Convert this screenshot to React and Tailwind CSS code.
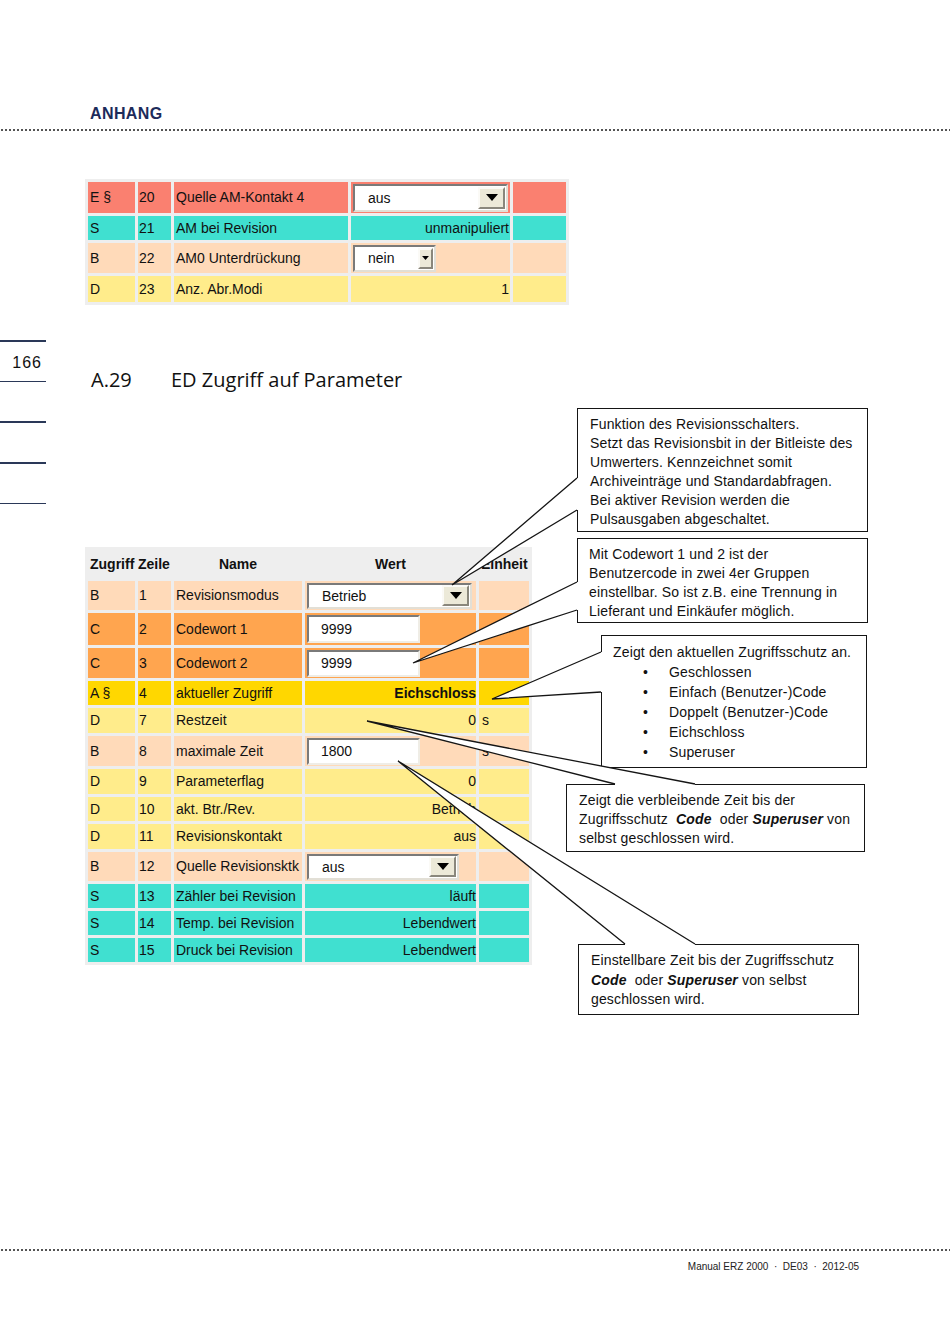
import React from 'react';

const Tri = ({ cls = 'w-[12px] h-[7px]' }) => (
  <svg viewBox="0 0 12 7" className={cls}>
    <path d="M0 0H12L6 7Z" fill="#000" />
  </svg>
);

const Select = ({ value, box, btn, tri }) => (
  <div
    className={`flex items-center justify-between bg-white border-2 border-t-[#7a7a7a] border-l-[#7a7a7a] border-r-[#e2dfd6] border-b-[#e2dfd6] ${box}`}
  >
    <span className="pl-[13px] text-[14px] leading-none text-[#111]">{value}</span>
    <span
      className={`mr-px flex items-center justify-center bg-[#ece9d8] border-2 border-t-[#fbfaf6] border-l-[#fbfaf6] border-r-[#8a877c] border-b-[#8a877c] ${btn}`}
    >
      <Tri cls={tri} />
    </span>
  </div>
);

const Input = ({ value, box = 'w-[113px] h-[28px]' }) => (
  <div
    className={`flex items-center bg-white border-2 border-t-[#7a7a7a] border-l-[#7a7a7a] border-r-[#efede6] border-b-[#efede6] ${box}`}
  >
    <span className="pl-[12px] text-[14px] leading-none text-[#111]">{value}</span>
  </div>
);

const PEACH = 'bg-[#ffdab9]';
const SALMON = 'bg-[#fa8070]';
const TURQ = 'bg-[#40e0d0]';
const YEL = 'bg-[#ffec8b]';
const ORANGE = 'bg-[#ffa54f]';
const GOLD = 'bg-[#ffd700]';

const topRows = [
  ['E §', '20', 'Quelle AM-Kontakt 4', SALMON, 'h-[31px]',
    <Select value="aus" box="w-[155px] h-[28px]" btn="w-[27px] h-[22px]" />],
  ['S', '21', 'AM bei Revision', TURQ, 'h-[24px]', 'unmanipuliert'],
  ['B', '22', 'AM0 Unterdrückung', PEACH, 'h-[30px]',
    <Select value="nein" box="w-[83px] h-[27px]" btn="w-[15px] h-[21px]" tri="w-[7px] h-[4px]" />],
  ['D', '23', 'Anz. Abr.Modi', YEL, 'h-[26px]', '1'],
];

const mainRows = [
  ['B', '1', 'Revisionsmodus', PEACH, 'h-[29px]',
    <Select value="Betrieb" box="w-[165px] h-[26px]" btn="w-[27px] h-[21px]" />, ''],
  ['C', '2', 'Codewort 1', ORANGE, 'h-[32px]', <Input value="9999" />, ''],
  ['C', '3', 'Codewort 2', ORANGE, 'h-[30px]', <Input value="9999" box="w-[113px] h-[27px]" />, ''],
  ['A §', '4', 'aktueller Zugriff', GOLD, 'h-[24px]', <b>Eichschloss</b>, ''],
  ['D', '7', 'Restzeit', YEL, 'h-[25px]', '0', 's'],
  ['B', '8', 'maximale Zeit', PEACH, 'h-[30px]', <Input value="1800" box="w-[113px] h-[27px]" />, 's'],
  ['D', '9', 'Parameterflag', YEL, 'h-[25px]', '0', ''],
  ['D', '10', 'akt. Btr./Rev.', YEL, 'h-[24px]', 'Betrieb', ''],
  ['D', '11', 'Revisionskontakt', YEL, 'h-[25px]', 'aus', ''],
  ['B', '12', 'Quelle Revisionsktk', PEACH, 'h-[29px]',
    <Select value="aus" box="w-[152px] h-[26px]" btn="w-[27px] h-[21px]" />, ''],
  ['S', '13', 'Zähler bei Revision', TURQ, 'h-[24px]', 'läuft', ''],
  ['S', '14', 'Temp. bei Revision', TURQ, 'h-[24px]', 'Lebendwert', ''],
  ['S', '15', 'Druck bei Revision', TURQ, 'h-[24px]', 'Lebendwert', ''],
];

const tails = [
  { tip: [452, 585], a: [577, 478], b: [577, 510], side: 'left' },
  { tip: [413, 663], a: [577, 582], b: [577, 610], side: 'left' },
  { tip: [492, 699], a: [601, 652], b: [601, 692], side: 'left' },
  { tip: [367, 721], a: [615, 784], b: [695, 784], side: 'top' },
  { tip: [398, 761], a: [625, 944], b: [695, 944], side: 'top' },
];

const Dots = () => (
  <div className="h-[2px] w-full bg-[radial-gradient(circle,#555_0.9px,transparent_1.2px)] bg-[length:4px_2px]" />
);

const Rule = () => <div className="h-[1.5px] w-[46px] bg-[#2a3858]" />;

const Callout = ({ cls, children }) => (
  <div className={`bg-white border-[1.5px] border-[#151515] overflow-hidden text-[14px] tracking-[0.15px] text-[#111] ${cls}`}>
    {children}
  </div>
);

const bullets = ['Geschlossen', 'Einfach (Benutzer-)Code', 'Doppelt (Benutzer-)Code', 'Eichschloss', 'Superuser'];

export default function App() {
  return (
    <div className="relative w-[950px] h-[1344px] overflow-hidden bg-white flex flex-col font-['Liberation_Sans',Arial,sans-serif] text-[#111]">
      {/* header */}
      <div className="pt-[104px] pl-[90px] text-[16px] font-bold leading-[20px] text-[#1c2b5a] tracking-[0.4px]">
        ANHANG
      </div>
      <div className="mt-[5px]">
        <Dots />
      </div>

      {/* tail of previous table */}
      <table className="mt-[48px] ml-[85px] border-separate border-spacing-[3px] bg-[#eeeeee] table-fixed w-[481px] text-[14px]">
        <colgroup>
          <col className="w-[47px]" />
          <col className="w-[33px]" />
          <col className="w-[174px]" />
          <col className="w-[159px]" />
          <col className="w-[53px]" />
        </colgroup>
        <tbody>
          {topRows.map(([a, z, n, bg, h, v]) => (
            <tr key={z}>
              <td className={`p-0 pl-[2px] ${bg} ${h}`}>{a}</td>
              <td className={`p-0 pl-[1px] ${bg}`}>{z}</td>
              <td className={`p-0 pl-[2px] ${bg}`}>{n}</td>
              <td className={`p-0 ${bg} ${typeof v === 'string' ? 'text-right pr-px' : 'pl-[2px]'}`}>{v}</td>
              <td className={`p-0 ${bg}`}></td>
            </tr>
          ))}
        </tbody>
      </table>

      {/* section */}
      <div className="mt-[35px] flex">
        <div className="w-[46px] flex flex-col">
          <Rule />
          <div className="h-[39px] flex items-center justify-end pr-[4px] pt-[3px] text-[16px] tracking-[1px]">166</div>
          <Rule />
          <div className="h-[39px]" />
          <Rule />
          <div className="h-[39.5px]" />
          <Rule />
          <div className="h-[39px]" />
          <Rule />
        </div>

        <div className="ml-[39px] w-[481px] flex flex-col">
          <div className="mt-[28px] pl-[6px] flex h-[24px] items-center text-[20px] leading-[24px] font-['Open_Sans',Arial,sans-serif]">
            <span className="w-[80px]">A.29</span>
            <span>ED Zugriff auf Parameter</span>
          </div>

          <table className="mt-[155px] border-separate border-spacing-[3px] bg-[#eeeeee] table-fixed w-[447px] text-[14px]">
            <colgroup>
              <col className="w-[47px]" />
              <col className="w-[33px]" />
              <col className="w-[128px]" />
              <col className="w-[171px]" />
              <col className="w-[50px]" />
            </colgroup>
            <tbody>
              <tr className="font-bold">
                <td className="p-0 pl-[2px] h-[28px]">Zugriff</td>
                <td className="p-0">Zeile</td>
                <td className="p-0 text-center">Name</td>
                <td className="p-0 text-center">Wert</td>
                <td className="p-0 pl-[2px]">Einheit</td>
              </tr>
              {mainRows.map(([a, z, n, bg, h, v, u]) => (
                <tr key={z}>
                  <td className={`p-0 pl-[2px] ${bg} ${h}`}>{a}</td>
                  <td className={`p-0 pl-px ${bg}`}>{z}</td>
                  <td className={`p-0 pl-[2px] whitespace-nowrap ${bg}`}>{n}</td>
                  <td className={`p-0 ${bg} ${typeof v === 'object' && v.type !== 'b' ? 'pl-[2px]' : 'text-right pr-0'}`}>{v}</td>
                  <td className={`p-0 pl-[3px] ${bg}`}>{u}</td>
                </tr>
              ))}
            </tbody>
          </table>
        </div>

        {/* notes */}
        <div className="flex flex-col w-[302px]">
          <Callout cls="mt-[68px] ml-[11px] w-[291px] h-[124px] pl-[12px] pt-[6px] leading-[19px]">
            Funktion des Revisionsschalters.<br />
            Setzt das Revisionsbit in der Bitleiste des<br />
            Umwerters. Kennzeichnet somit<br />
            Archiveinträge und Standardabfragen.<br />
            Bei aktiver Revision werden die<br />
            Pulsausgaben abgeschaltet.
          </Callout>
          <Callout cls="mt-[6px] ml-[11px] w-[291px] h-[85px] pl-[11px] pt-[6px] leading-[19px]">
            Mit Codewort 1 und 2 ist der<br />
            Benutzercode in zwei 4er Gruppen<br />
            einstellbar. So ist z.B. eine Trennung in<br />
            Lieferant und Einkäufer möglich.
          </Callout>
          <Callout cls="mt-[12px] ml-[35px] w-[266px] h-[133px] pl-[11px] pt-[6px] leading-[20px]">
            <div>Zeigt den aktuellen Zugriffsschutz an.</div>
            {bullets.map((b) => (
              <div key={b} className="flex pl-[30px]">
                <span className="w-[26px]">•</span>
                <span>{b}</span>
              </div>
            ))}
          </Callout>
          <Callout cls="mt-[16px] ml-0 w-[299px] h-[68px] pl-[12px] pt-[6px] leading-[19px]">
            Zeigt die verbleibende Zeit bis der<br />
            Zugriffsschutz&nbsp; <b><i>Code</i></b>&nbsp; oder <b><i>Superuser</i></b> von<br />
            selbst geschlossen wird.
          </Callout>
          <Callout cls="mt-[92px] ml-[12px] w-[281px] h-[71px] pl-[12px] pt-[6px] leading-[19.5px]">
            Einstellbare Zeit bis der Zugriffsschutz<br />
            <b><i>Code</i></b>&nbsp; oder <b><i>Superuser</i></b> von selbst<br />
            geschlossen wird.
          </Callout>
        </div>
      </div>

      {/* footer */}
      <div className="mt-auto pb-[70px]">
        <Dots />
        <div className="mt-[9px] flex justify-end pr-[91px] text-[10px] leading-[14px] text-[#222] whitespace-pre">
          {'Manual ERZ 2000  ·  DE03  ·  2012-05'}
        </div>
      </div>

      {/* callout tails drawn over the table */}
      <svg className="absolute left-0 top-0 w-[950px] h-[1344px] pointer-events-none" viewBox="0 0 950 1344">
        {tails.map((t, i) => {
          const [tx, ty] = t.tip;
          const [ax, ay] = t.a;
          const [bx, by] = t.b;
          const a2 = t.side === 'left' ? [ax + 2.5, ay] : [ax, ay + 2.5];
          const b2 = t.side === 'left' ? [bx + 2.5, by] : [bx, by + 2.5];
          return (
            <g key={i}>
              <polygon
                points={`${tx},${ty} ${ax},${ay} ${a2[0]},${a2[1]} ${b2[0]},${b2[1]} ${bx},${by}`}
                fill="#fff"
              />
              <polyline points={`${ax},${ay} ${tx},${ty} ${bx},${by}`} fill="none" stroke="#151515" strokeWidth="1.3" />
            </g>
          );
        })}
      </svg>
    </div>
  );
}
